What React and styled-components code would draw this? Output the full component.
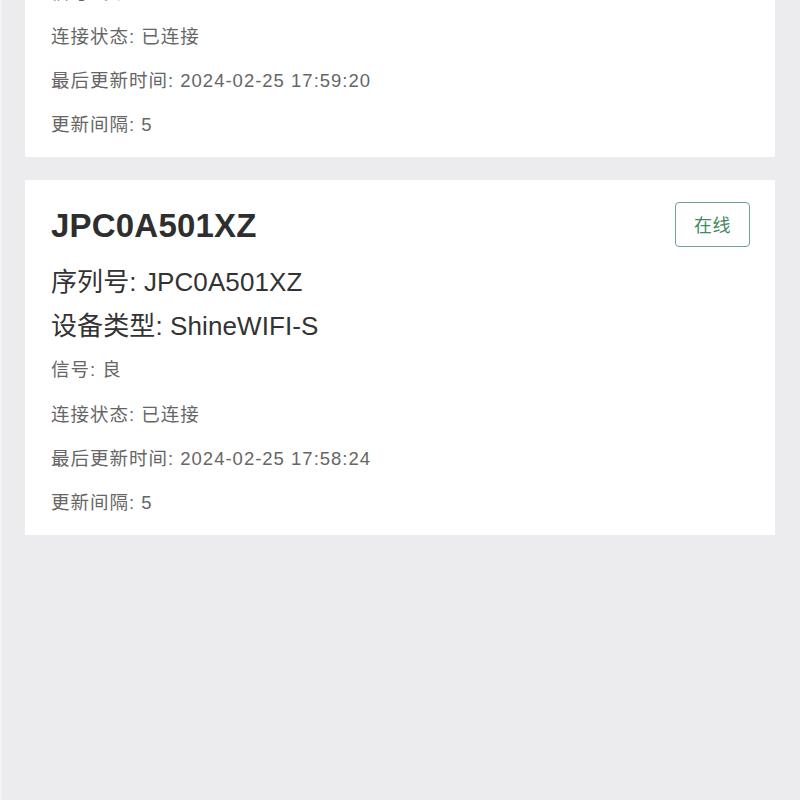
import React, { useLayoutEffect, useRef } from "react";
import styled, { createGlobalStyle } from "styled-components";

const GlobalStyle = createGlobalStyle`
  html, body {
    margin: 0;
    padding: 0;
    background: #ececee;
  }
  body {
    font-family: "Liberation Sans", "Noto Sans CJK SC", sans-serif;
  }
`;

// lista de dispositivos rolada
const Screen = styled.div`
  height: 800px;
  overflow-y: auto;
  background: #ececee;
  border-left: 2px solid #f4f4f6;
  box-sizing: border-box;

  &::-webkit-scrollbar {
    display: none;
  }
`;

const DeviceList = styled.div`
  display: flex;
  flex-direction: column;
  gap: 23px;
  padding: 22px 25px 300px 23px;
`;

const Card = styled.div`
  background: #ffffff;
  padding: 22px 25px 9px 26px;
`;

const CardHeader = styled.div`
  display: flex;
  align-items: center;
  justify-content: space-between;
  height: 45px;
  margin-bottom: 13px;
`;

const Title = styled.h2`
  margin: 3px 0 0;
  font-size: 33px;
  font-weight: 700;
  color: #2e2e2e;
  letter-spacing: 0.2px;
`;

const StatusTag = styled.div`
  display: flex;
  align-items: center;
  justify-content: center;
  width: 75px;
  height: 45px;
  box-sizing: border-box;
  border: 1px solid ${(p) => (p.$online ? "#6fa58a" : "#c0c0c0")};
  border-radius: 4px;
  color: ${(p) => (p.$online ? "#3f8a5f" : "#999")};
  font-size: 18px;
  letter-spacing: 0.5px;
`;

const InfoLine = styled.div`
  line-height: 44.3px;
  font-size: ${(p) => (p.$big ? "26px" : "18.5px")};
  letter-spacing: ${(p) => (p.$big ? "0.1px" : "1px")};
  color: ${(p) => (p.$big ? "#333333" : "#666666")};
  white-space: nowrap;
`;

const devices = [
  {
    name: "JPC0A501XY",
    serial: "JPC0A501XY",
    type: "ShineWIFI-S",
    signal: "良",
    status: "已连接",
    updated: "2024-02-25 17:59:20",
    interval: 5,
    online: true,
  },
  {
    name: "JPC0A501XZ",
    serial: "JPC0A501XZ",
    type: "ShineWIFI-S",
    signal: "良",
    status: "已连接",
    updated: "2024-02-25 17:58:24",
    interval: 5,
    online: true,
  },
];

const DeviceCard = ({ device }) => (
  <Card>
    <CardHeader>
      <Title>{device.name}</Title>
      <StatusTag $online={device.online}>{device.online ? "在线" : "离线"}</StatusTag>
    </CardHeader>
    <InfoLine $big>序列号: {device.serial}</InfoLine>
    <InfoLine $big>设备类型: {device.type}</InfoLine>
    <InfoLine>信号: {device.signal}</InfoLine>
    <InfoLine>连接状态: {device.status}</InfoLine>
    <InfoLine>最后更新时间: {device.updated}</InfoLine>
    <InfoLine>更新间隔: {device.interval}</InfoLine>
  </Card>
);

export default function App() {
  const screenRef = useRef(null);
  const secondRef = useRef(null);

  // posição de rolagem igual à captura
  useLayoutEffect(() => {
    if (screenRef.current && secondRef.current) {
      screenRef.current.scrollTop = secondRef.current.offsetTop - 180;
    }
  }, []);

  return (
    <>
      <GlobalStyle />
      <Screen ref={screenRef} style={{ position: "relative" }}>
        <DeviceList>
          {devices.map((d, i) => (
            <div key={d.name} ref={i === 1 ? secondRef : null}>
              <DeviceCard device={d} />
            </div>
          ))}
        </DeviceList>
      </Screen>
    </>
  );
}
